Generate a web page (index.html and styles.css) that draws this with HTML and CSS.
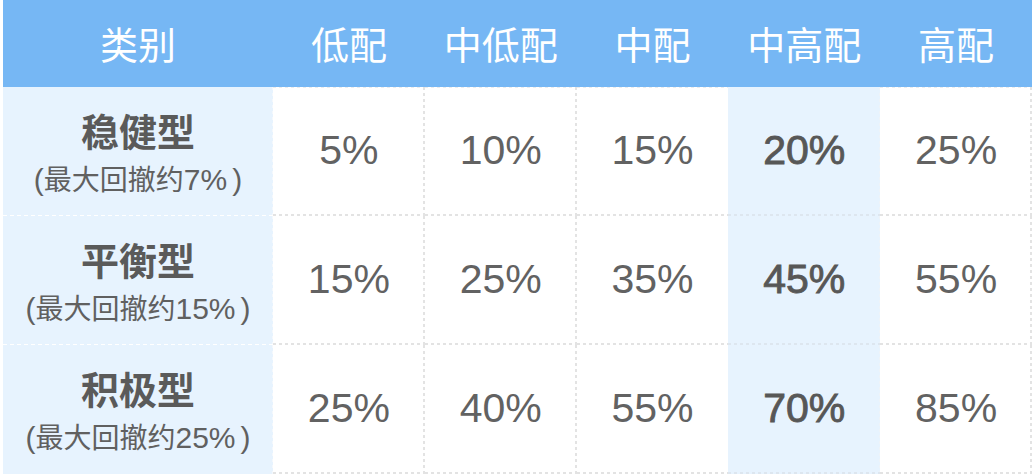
FILE: index.html
```html
<!DOCTYPE html>
<html lang="zh-CN">
<head>
<meta charset="utf-8">
<title>配置比例</title>
<link rel="stylesheet" href="styles.css">
</head>
<body>
<div class="table">
  <div class="hd">类别</div>
  <div class="hd">低配</div>
  <div class="hd">中低配</div>
  <div class="hd">中配</div>
  <div class="hd">中高配</div>
  <div class="hd">高配</div>

  <div class="cat">
    <div class="cat-name">稳健型</div>
    <div class="cat-sub"><span class="lat">(</span>最大回撤约<span class="lat">7%</span><span class="lat close">)</span></div>
  </div>
  <div class="val first">5%</div>
  <div class="val first">10%</div>
  <div class="val first nr">15%</div>
  <div class="val first hl">20%</div>
  <div class="val first">25%</div>

  <div class="cat">
    <div class="cat-name">平衡型</div>
    <div class="cat-sub"><span class="lat">(</span>最大回撤约<span class="lat">15%</span><span class="lat close">)</span></div>
  </div>
  <div class="val">15%</div>
  <div class="val">25%</div>
  <div class="val nr">35%</div>
  <div class="val hl">45%</div>
  <div class="val">55%</div>

  <div class="cat last">
    <div class="cat-name">积极型</div>
    <div class="cat-sub"><span class="lat">(</span>最大回撤约<span class="lat">25%</span><span class="lat close">)</span></div>
  </div>
  <div class="val">25%</div>
  <div class="val">40%</div>
  <div class="val nr">55%</div>
  <div class="val hl">70%</div>
  <div class="val">85%</div>
</div>
</body>
</html>
```

FILE: styles.css
```css
html, body {
  margin: 0;
  padding: 0;
  background: #ffffff;
}

.table {
  margin-left: 3px;
  width: 1029px;
  display: grid;
  grid-template-columns: 270px repeat(5, 1fr);
  grid-template-rows: 87px repeat(3, 129px);
}

.hd {
  background: #76b7f4;
  color: #ffffff;
  font-family: "Noto Sans CJK SC", sans-serif;
  font-size: 38px;
  font-weight: 400;
  display: flex;
  align-items: center;
  justify-content: center;
  padding-bottom: 2px;
}

.cat {
  background-color: #e7f3fe;
  background-image:
    repeating-linear-gradient(90deg, #ffffff 0 4px, transparent 4px 7px),
    repeating-linear-gradient(180deg, #f4f8fc 0 3px, transparent 3px 6px);
  background-size: 100% 1px, 1px 100%;
  background-position: left bottom, right top;
  background-repeat: no-repeat;
  display: flex;
  flex-direction: column;
  align-items: center;
  justify-content: center;
  padding-top: 2px;
  color: #5a5a5a;
  font-family: "Noto Sans CJK SC", sans-serif;
}

.cat.last {
  background-size: 0 0, 1px 100%;
}

.cat-name {
  font-size: 38px;
  font-weight: 700;
  line-height: 44px;
}

.cat-sub {
  font-size: 28px;
  font-weight: 400;
  line-height: 36px;
  margin-top: 8px;
  color: #606060;
  white-space: nowrap;
}

.cat-sub .lat {
  font-family: "Liberation Sans", Arial, sans-serif;
  font-size: 30px;
}

.cat-sub .close {
  margin-left: 5px;
}

.val {
  background-color: #ffffff;
  background-image:
    repeating-linear-gradient(90deg, #e3e3e3 0 3px, transparent 3px 6px),
    repeating-linear-gradient(180deg, #e3e3e3 0 3px, transparent 3px 6px);
  background-size: 100% 2px, 2px 100%;
  background-position: left bottom, right top;
  background-repeat: no-repeat;
  display: flex;
  align-items: center;
  justify-content: center;
  font-family: "Liberation Sans", Arial, sans-serif;
  font-size: 41px;
  color: #626262;
  padding-bottom: 2px;
}

.val.first {
  background-image:
    repeating-linear-gradient(90deg, #e3e3e3 0 3px, transparent 3px 6px),
    repeating-linear-gradient(180deg, #e3e3e3 0 3px, transparent 3px 6px),
    repeating-linear-gradient(90deg, #ececec 0 3px, transparent 3px 6px);
  background-size: 100% 2px, 2px 100%, 100% 1px;
  background-position: left bottom, right top, left top;
}

.val.nr {
  background-size: 100% 2px, 0 0, 100% 1px;
}

.val.hl {
  background-color: #e7f3fe;
  background-image:
    repeating-linear-gradient(90deg, #dde6ef 0 3px, transparent 3px 6px),
    repeating-linear-gradient(180deg, #eef3f8 0 3px, transparent 3px 6px);
  background-size: 100% 2px, 1px 100%;
  background-position: left bottom, right top;
  color: #575757;
  -webkit-text-stroke: 0.9px #575757;
}
```
